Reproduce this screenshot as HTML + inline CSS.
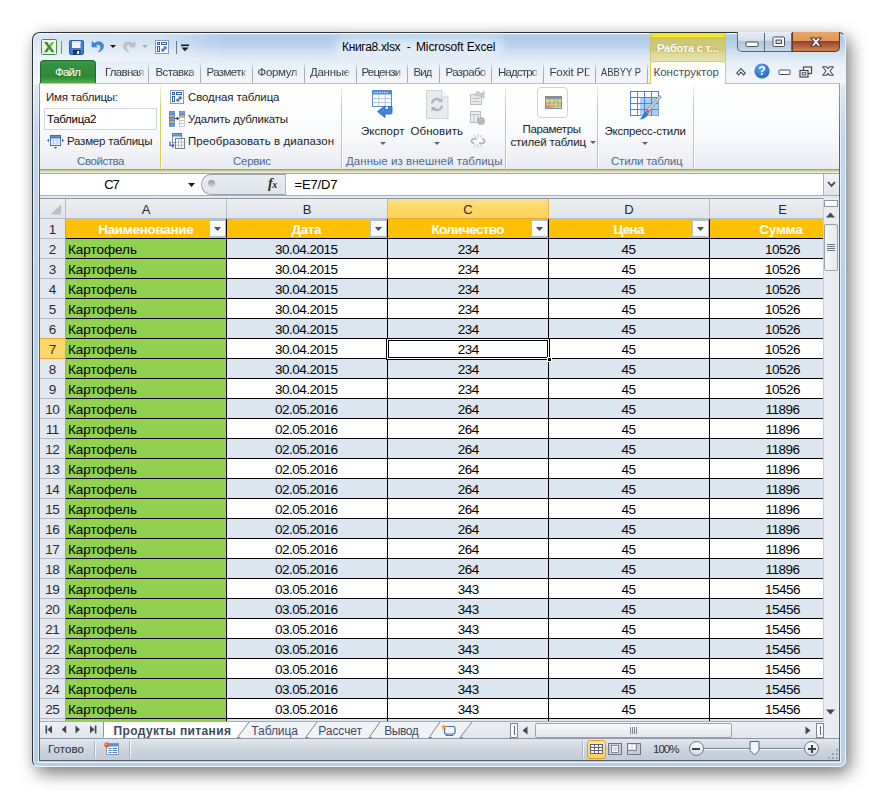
<!DOCTYPE html>
<html lang="ru"><head><meta charset="utf-8"><title>Книга8.xlsx - Microsoft Excel</title>
<style>
html,body{margin:0;padding:0;background:#fff;}
body{width:879px;height:800px;overflow:hidden;position:relative;font-family:"Liberation Sans",sans-serif;}
#r div,#r span.t,#r svg{position:absolute;box-sizing:border-box;}
#r span.t{white-space:nowrap;}
#r{position:absolute;left:0;top:0;width:879px;height:800px;overflow:hidden;}
</style></head>
<body><div id="r">
<div style="left:32px;top:32px;width:814px;height:735px;border-radius:8px 8px 7px 7px;background:#b4d0ea;box-shadow:4px 6px 17px 0 rgba(0,0,0,.54);"></div>
<div style="left:32px;top:32px;width:814px;height:735px;border-radius:8px 8px 7px 7px;border:1px solid #2c3238;border-right-color:#eef4fa;border-bottom-color:#eef4fa;background:linear-gradient(#c6daef 0px,#aecbe9 4px,#b9d2ec 12px,#d3e2f2 21px,#e7eff7 30px,#f0f4f9 42px,#f3f6fa 51px,#dde8f4 52px,#d2e2f2 73px,#c1d8ee 98px,#b9d4ec 218px,#b4d0ea 260px,#b4d0ea 735px);"></div>
<div style="left:33px;top:33px;width:812px;height:733px;border-radius:7px 7px 6px 6px;border:1px solid rgba(255,255,255,.8);border-right:none;border-bottom:none;"></div>
<div style="left:38px;top:83px;width:803px;height:680px;border:1px solid #e8f0f8;border-top:none;"></div>
<div style="left:39px;top:83px;width:801px;height:678px;background:#fff;border:1px solid #566070;border-top:none;"></div>
<div style="left:39px;top:83px;width:1px;height:60px;background:linear-gradient(#98a2b0,#566070)"></div>
<div style="left:839px;top:83px;width:1px;height:60px;background:linear-gradient(#98a2b0,#566070)"></div>
<div style="left:336px;top:39px;width:166px;height:17px;background:rgba(255,255,255,.6);filter:blur(6px);border-radius:8px"></div>
<div style="left:34px;top:34px;width:190px;height:27px;background:linear-gradient(90deg,rgba(255,255,255,.5),rgba(255,255,255,.42) 65%,rgba(255,255,255,0));border-radius:6px 0 0 0"></div>
<span class="t" id="t1" style="font-size:12px;color:#000;line-height:18px;top:38.00px;letter-spacing:-0.318px;left:342px;">Книга8.xlsx</span>
<span class="t" id="t2" style="font-size:12px;color:#000;line-height:18px;top:38.00px;left:406.8px;">-</span>
<span class="t" id="t3" style="font-size:12px;color:#000;line-height:18px;top:38.00px;letter-spacing:-0.133px;left:416px;">Microsoft Excel</span>
<div style="left:650px;top:33px;width:76px;height:28px;background:linear-gradient(#f5e626 0,#f5e626 4px,#cdc670 4px,#d0ca78 17px,#dfd99c 21px,#e6e2b0 28px);border-left:1px solid #c9c36a;border-right:1px solid #c9c36a;"></div>
<span class="t" id="t4" style="font-size:11px;color:#fff;line-height:16px;top:39.50px;font-weight:700;letter-spacing:-0.198px;left:657px;text-shadow:0 0 2px #a8a250;">Работа с т...</span>
<div style="left:737px;top:32px;width:103px;height:20px;border:1px solid #5a6a7c;border-top:none;border-radius:0 0 5px 5px;background:linear-gradient(#e8f0f8,#d2deea 45%,#b4c6d8 50%,#c6d6e6);"></div>
<div style="left:792px;top:32px;width:48px;height:20px;border:1px solid #6a3a30;border-top:none;border-radius:0 0 5px 0;background:linear-gradient(#e9a868,#e09858 45%,#9a4030 50%,#c87848 90%);"></div>
<div style="left:764px;top:33px;width:1px;height:18px;background:#5a6a7c"></div>
<div style="left:791px;top:33px;width:1px;height:18px;background:#5a6a7c"></div>
<svg style="left:41px;top:39px" width="16" height="16" viewBox="0 0 16 16" ><rect x="0.5" y="0.5" width="15" height="15" rx="1" fill="#f4f1d8" stroke="#3a9440"/><rect x="9" y="2" width="5" height="12" fill="#fff"/><path d="M3 3h3.2l2 3.2L10.4 3h3L9.8 8l3.8 5.2h-3.2L8.2 9.8 6 13.200H3L6.700 8z" fill="#2f8f38"/><path d="M8.200 6.200L10.400 3h3L9.8 8z" fill="#7cc850"/></svg>
<div style="left:61px;top:41px;width:1px;height:13px;background:#7f8a98"></div>
<svg style="left:69px;top:40px" width="15" height="15" viewBox="0 0 15 15" ><rect x="0.500" y="0.500" width="14" height="14" rx="1.200" fill="#3f7fd0" stroke="#2a5fb0"/><rect x="3" y="1" width="8.500" height="7" fill="#f4f6fa"/><rect x="3" y="1" width="8.500" height="2" fill="#dfe6f0"/><rect x="4" y="10" width="7.500" height="4.500" fill="#26324a"/><rect x="8" y="11" width="2.200" height="3" fill="#e8ecf2"/></svg>
<svg style="left:91px;top:40px" width="14" height="13" viewBox="0 0 14 13" ><path d="M1 1.500v5.500h5.500L4.600 5.200C6.500 3.800 9.200 4.300 9.600 6.600c0.300 2-0.600 3.800-2.400 5.400 3.600-1 5.800-3.600 5.200-6.800C11.800 1.600 6.800 0.400 3.200 3.600z" fill="#3f86d8" stroke="#2a6cc0" stroke-width=".5"/></svg>
<svg style="left:110px;top:45px" width="6" height="3" viewBox="0 0 6 3" ><path d="M0 0h6L3 3z" fill="#1a1a1a"/></svg>
<svg style="left:123px;top:40px" width="13" height="13" viewBox="0 0 13 13" ><path d="M12 1.500v5.500H6.500l1.900-1.800C6.500 3.800 3.800 4.300 3.400 6.600c-0.300 2 0.600 3.800 2.400 5.400-3.600-1-5.800-3.600-5.200-6.800C1.200 1.600 6.200 0.400 9.800 3.600z" fill="#bcc3cb" stroke="#aab2bc" stroke-width=".5"/></svg>
<svg style="left:142px;top:45px" width="6" height="3" viewBox="0 0 6 3" ><path d="M0 0h6L3 3z" fill="#a4abb4"/></svg>
<svg style="left:155px;top:40px" width="14" height="14" viewBox="0 0 14 14" ><rect x="0.500" y="0.500" width="13" height="13" fill="#fbfcfd" stroke="#8f98a6"/><rect x="2.500" y="2.500" width="2" height="2" fill="#fff" stroke="#2f5fc0"/><rect x="6.500" y="2.500" width="5" height="2" fill="#fff" stroke="#2f5fc0"/><rect x="2.500" y="6.500" width="2" height="5" fill="#fff" stroke="#2f5fc0"/><path d="M7 11l4-4M8.500 7h2.500v2.500M7 8.500V11h2.500" stroke="#2f5fc0" fill="none" stroke-width="1.100"/></svg>
<div style="left:176px;top:41px;width:1px;height:13px;background:#6f7a88"></div>
<svg style="left:181px;top:44px" width="8" height="8" viewBox="0 0 8 8" ><rect x="0" y="0.500" width="8" height="1.600" fill="#1a1a1a"/><path d="M0.500 3.500h7L4 7.200z" fill="#1a1a1a"/></svg>
<svg style="left:745px;top:41px" width="14" height="7" viewBox="0 0 14 7" ><rect x="1" y="1" width="12" height="4.500" rx="0.800" fill="#fff" stroke="#46505e" stroke-width="1"/></svg>
<svg style="left:772px;top:36px" width="14" height="12" viewBox="0 0 14 12" ><rect x="1" y="1" width="11.500" height="9.500" rx="1" fill="#fff" stroke="#46505e"/><rect x="4" y="4" width="5.500" height="3.500" fill="#c8d4e2" stroke="#46505e"/></svg>
<svg style="left:810px;top:36.5px" width="12" height="10" viewBox="0 0 12 10" ><path d="M0.800 0.800h3.700L6 2.700 7.500 0.800h3.700L7.900 5l3.300 4.200H7.500L6 7.300 4.500 9.200H0.800L4.100 5z" fill="#fff" stroke="#5a3030" stroke-width="1.100" stroke-linejoin="round"/></svg>
<svg style="left:736px;top:67px" width="10" height="9" viewBox="0 0 10 9" ><path d="M0.800 6.200L5 1.600l4.200 4.600-1.700 1.700L5 5.200 2.500 7.900z" fill="#fff" stroke="#3a4450" stroke-width="1.100" stroke-linejoin="round"/></svg>
<svg style="left:754px;top:63px" width="16" height="16" viewBox="0 0 16 16" ><defs><radialGradient id="hg" cx="40%" cy="30%" r="75%"><stop offset="0" stop-color="#5aa6ee"/><stop offset="1" stop-color="#1c66c4"/></radialGradient></defs><circle cx="8" cy="8" r="7.600" fill="url(#hg)"/><text x="8" y="12.300" text-anchor="middle" font-family="Liberation Sans,sans-serif" font-weight="700" font-size="12" fill="#fff">?</text></svg>
<svg style="left:778px;top:69px" width="13" height="7" viewBox="0 0 13 7" ><rect x="1" y="1" width="11" height="4.500" rx="0.800" fill="#fff" stroke="#46505e"/></svg>
<svg style="left:799px;top:66px" width="14" height="12" viewBox="0 0 14 12" ><rect x="4.500" y="1" width="8" height="6.500" fill="#fff" stroke="#3a4450" stroke-width="1.200"/><rect x="1" y="4.500" width="8" height="6.500" fill="#fff" stroke="#3a4450" stroke-width="1.200"/><rect x="3.200" y="6.700" width="3.600" height="2.200" fill="#fff" stroke="#3a4450" stroke-width="0.900"/></svg>
<svg style="left:822px;top:66px" width="12" height="10" viewBox="0 0 12 10" ><path d="M0.800 0.800h3.700L6 2.700 7.500 0.800h3.700L7.900 5l3.300 4.200H7.500L6 7.300 4.500 9.200H0.800L4.100 5z" fill="#fff" stroke="#46505e" stroke-width="1.100" stroke-linejoin="round"/></svg>
<div style="left:40px;top:60px;width:56px;height:23px;border-radius:4px 4px 0 0;background:linear-gradient(#3a9644,#2c8836 70%,#3c9c3c 85%,#56b048);border:1px solid #1e6a2a;border-bottom:none;"></div>
<span class="t" id="t5" style="font-size:11.5px;color:#fff;line-height:17px;top:63.50px;letter-spacing:-0.760px;left:55px;">Файл</span>
<div style="left:105px;top:63.50px;width:38.5px;height:17px;overflow:hidden"><span class="t" id="t6" style="font-size:11.5px;color:#3a404a;line-height:17px;top:0px;letter-spacing:-0.709px;left:0px;-webkit-mask-image:linear-gradient(90deg,#000 34px,rgba(0,0,0,.35) 38px);">Главная</span></div>
<div style="left:155.5px;top:63.50px;width:39.0px;height:17px;overflow:hidden"><span class="t" id="t7" style="font-size:11.5px;color:#3a404a;line-height:17px;top:0px;letter-spacing:-0.619px;left:0px;-webkit-mask-image:linear-gradient(90deg,#000 35px,rgba(0,0,0,.35) 39px);">Вставка</span></div>
<div style="left:206.5px;top:63.50px;width:39.5px;height:17px;overflow:hidden"><span class="t" id="t8" style="font-size:11.5px;color:#3a404a;line-height:17px;top:0px;letter-spacing:-0.603px;left:0px;-webkit-mask-image:linear-gradient(90deg,#000 35px,rgba(0,0,0,.35) 39px);">Разметка страницы</span></div>
<div style="left:257.5px;top:63.50px;width:40.5px;height:17px;overflow:hidden"><span class="t" id="t9" style="font-size:11.5px;color:#3a404a;line-height:17px;top:0px;letter-spacing:-0.355px;left:0px;-webkit-mask-image:linear-gradient(90deg,#000 36px,rgba(0,0,0,.35) 40px);">Формулы</span></div>
<div style="left:310px;top:63.50px;width:39.5px;height:17px;overflow:hidden"><span class="t" id="t10" style="font-size:11.5px;color:#3a404a;line-height:17px;top:0px;letter-spacing:-0.288px;left:0px;-webkit-mask-image:linear-gradient(90deg,#000 35px,rgba(0,0,0,.35) 39px);">Данные</span></div>
<div style="left:361.5px;top:63.50px;width:39.0px;height:17px;overflow:hidden"><span class="t" id="t11" style="font-size:11.5px;color:#3a404a;line-height:17px;top:0px;letter-spacing:-0.808px;left:0px;-webkit-mask-image:linear-gradient(90deg,#000 35px,rgba(0,0,0,.35) 39px);">Рецензирование</span></div>
<div style="left:413.5px;top:63.50px;width:20.5px;height:17px;overflow:hidden"><span class="t" id="t12" style="font-size:11.5px;color:#3a404a;line-height:17px;top:0px;letter-spacing:-0.902px;left:0px;-webkit-mask-image:linear-gradient(90deg,#000 16px,rgba(0,0,0,.35) 20px);">Вид</span></div>
<div style="left:445.5px;top:63.50px;width:40.0px;height:17px;overflow:hidden"><span class="t" id="t13" style="font-size:11.5px;color:#3a404a;line-height:17px;top:0px;letter-spacing:-0.641px;left:0px;-webkit-mask-image:linear-gradient(90deg,#000 36px,rgba(0,0,0,.35) 40px);">Разработчик</span></div>
<div style="left:498px;top:63.50px;width:39px;height:17px;overflow:hidden"><span class="t" id="t14" style="font-size:11.5px;color:#3a404a;line-height:17px;top:0px;letter-spacing:-0.845px;left:0px;-webkit-mask-image:linear-gradient(90deg,#000 35px,rgba(0,0,0,.35) 39px);">Надстройки</span></div>
<div style="left:549.5px;top:63.50px;width:40.0px;height:17px;overflow:hidden"><span class="t" id="t15" style="font-size:11.5px;color:#3a404a;line-height:17px;top:0px;letter-spacing:-0.198px;left:0px;-webkit-mask-image:linear-gradient(90deg,#000 36px,rgba(0,0,0,.35) 40px);">Foxit PDF</span></div>
<span class="t" id="t16" style="font-size:11.5px;color:#3a404a;line-height:17px;top:63.50px;left:601px;transform:scaleX(0.815);transform-origin:0 50%;">ABBYY P</span>
<div style="left:148px;top:62px;width:1px;height:21px;background:linear-gradient(rgba(150,160,175,0),#a8b0bc 40%,#a0a8b4);"></div>
<div style="left:200px;top:62px;width:1px;height:21px;background:linear-gradient(rgba(150,160,175,0),#a8b0bc 40%,#a0a8b4);"></div>
<div style="left:252px;top:62px;width:1px;height:21px;background:linear-gradient(rgba(150,160,175,0),#a8b0bc 40%,#a0a8b4);"></div>
<div style="left:304px;top:62px;width:1px;height:21px;background:linear-gradient(rgba(150,160,175,0),#a8b0bc 40%,#a0a8b4);"></div>
<div style="left:356px;top:62px;width:1px;height:21px;background:linear-gradient(rgba(150,160,175,0),#a8b0bc 40%,#a0a8b4);"></div>
<div style="left:407px;top:62px;width:1px;height:21px;background:linear-gradient(rgba(150,160,175,0),#a8b0bc 40%,#a0a8b4);"></div>
<div style="left:439px;top:62px;width:1px;height:21px;background:linear-gradient(rgba(150,160,175,0),#a8b0bc 40%,#a0a8b4);"></div>
<div style="left:491px;top:62px;width:1px;height:21px;background:linear-gradient(rgba(150,160,175,0),#a8b0bc 40%,#a0a8b4);"></div>
<div style="left:543px;top:62px;width:1px;height:21px;background:linear-gradient(rgba(150,160,175,0),#a8b0bc 40%,#a0a8b4);"></div>
<div style="left:595px;top:62px;width:1px;height:21px;background:linear-gradient(rgba(150,160,175,0),#a8b0bc 40%,#a0a8b4);"></div>
<div style="left:647px;top:62px;width:1px;height:21px;background:linear-gradient(rgba(150,160,175,0),#a8b0bc 40%,#a0a8b4);"></div>
<div style="left:650px;top:61px;width:76px;height:23px;background:linear-gradient(#fffff4,#fff 40%);border:1px solid #d8d240;border-bottom:none;border-radius:3px 3px 0 0;"></div>
<span class="t" id="t17" style="font-size:11.5px;color:#444c58;line-height:17px;top:63.50px;letter-spacing:-0.008px;left:653.5px;">Конструктор</span>
<div style="left:40px;top:83px;width:799px;height:87px;background:linear-gradient(#ffffff,#fbfcfd 50%,#f1f3f7 78%,#e7ebf1);border-top:1px solid #d6cf30;"></div>
<div style="left:40px;top:169px;width:799px;height:1px;background:#a8a83c"></div>
<div style="left:40px;top:170px;width:799px;height:1px;background:#c6c67c"></div>
<div style="left:40px;top:171px;width:799px;height:1px;background:#dcdcb4"></div>
<div style="left:40px;top:172px;width:799px;height:1px;background:#e8ebe6"></div>
<div style="left:651px;top:83px;width:74px;height:1px;background:#fff"></div>
<div style="left:160px;top:85px;width:1px;height:84px;background:linear-gradient(rgba(216,207,90,.2),#d6ce5a 30%,#d6ce5a)"></div>
<div style="left:161px;top:85px;width:1px;height:84px;background:rgba(255,255,255,.9)"></div>
<div style="left:341px;top:85px;width:1px;height:84px;background:linear-gradient(rgba(216,207,90,.2),#d6ce5a 30%,#d6ce5a)"></div>
<div style="left:342px;top:85px;width:1px;height:84px;background:rgba(255,255,255,.9)"></div>
<div style="left:505px;top:85px;width:1px;height:84px;background:linear-gradient(rgba(216,207,90,.2),#d6ce5a 30%,#d6ce5a)"></div>
<div style="left:506px;top:85px;width:1px;height:84px;background:rgba(255,255,255,.9)"></div>
<div style="left:597px;top:85px;width:1px;height:84px;background:linear-gradient(rgba(216,207,90,.2),#d6ce5a 30%,#d6ce5a)"></div>
<div style="left:598px;top:85px;width:1px;height:84px;background:rgba(255,255,255,.9)"></div>
<div style="left:693px;top:85px;width:1px;height:84px;background:linear-gradient(rgba(216,207,90,.2),#d6ce5a 30%,#d6ce5a)"></div>
<div style="left:694px;top:85px;width:1px;height:84px;background:rgba(255,255,255,.9)"></div>
<span class="t" id="t18" style="font-size:11.5px;color:#1e1e1e;line-height:17px;top:89.00px;letter-spacing:-0.217px;left:46px;">Имя таблицы:</span>
<div style="left:44px;top:108px;width:113px;height:22px;background:#fff;border:1px solid #d0d6de;"></div>
<span class="t" id="t19" style="font-size:11.5px;color:#000;line-height:17px;top:110.50px;letter-spacing:-0.286px;left:47px;">Таблица2</span>
<span class="t" id="t20" style="font-size:11.5px;color:#1e1e1e;line-height:17px;top:132.50px;letter-spacing:-0.216px;left:67px;">Размер таблицы</span>
<span class="t" id="t21" style="font-size:11.5px;color:#4f6a8c;line-height:17px;top:152.50px;letter-spacing:-0.429px;left:77px;">Свойства</span>
<span class="t" id="t22" style="font-size:11.5px;color:#1e1e1e;line-height:17px;top:89.00px;letter-spacing:-0.109px;left:188px;">Сводная таблица</span>
<span class="t" id="t23" style="font-size:11.5px;color:#1e1e1e;line-height:17px;top:110.50px;letter-spacing:-0.241px;left:188px;">Удалить дубликаты</span>
<span class="t" id="t24" style="font-size:11.5px;color:#1e1e1e;line-height:17px;top:132.50px;letter-spacing:0.085px;left:188px;">Преобразовать в диапазон</span>
<span class="t" id="t25" style="font-size:11.5px;color:#4f6a8c;line-height:17px;top:152.50px;letter-spacing:-0.278px;left:233px;">Сервис</span>
<span class="t" id="t26" style="font-size:11.5px;color:#1e1e1e;line-height:17px;top:122.50px;letter-spacing:0.047px;left:361px;">Экспорт</span>
<span class="t" id="t27" style="font-size:11.5px;color:#1e1e1e;line-height:17px;top:122.50px;letter-spacing:0.060px;left:410.5px;">Обновить</span>
<span class="t" id="t28" style="font-size:11.5px;color:#4f6a8c;line-height:17px;top:152.50px;letter-spacing:0.035px;left:346px;">Данные из внешней таблицы</span>
<span class="t" id="t29" style="font-size:11.5px;color:#1e1e1e;line-height:17px;top:121.00px;letter-spacing:-0.352px;left:522.5px;">Параметры</span>
<span class="t" id="t30" style="font-size:11.5px;color:#1e1e1e;line-height:17px;top:133.50px;letter-spacing:-0.167px;left:510.5px;">стилей таблиц</span>
<span class="t" id="t31" style="font-size:11.5px;color:#1e1e1e;line-height:17px;top:122.50px;letter-spacing:-0.201px;left:604.5px;">Экспресс-стили</span>
<span class="t" id="t32" style="font-size:11.5px;color:#4f6a8c;line-height:17px;top:152.50px;letter-spacing:-0.196px;left:611px;">Стили таблиц</span>
<svg style="left:47px;top:134px" width="17" height="15" viewBox="0 0 17 15" ><rect x="3.500" y="1.500" width="10" height="10" fill="#fff" stroke="#3a68b8"/><rect x="3.500" y="1.500" width="10" height="2.500" fill="#5b8fd8" stroke="#3a68b8"/><path d="M6.500 4v7.500M10 4v7.500M3.500 6.500h10M3.500 9h10" stroke="#a8c0e4" stroke-width="0.800"/><path d="M0 6.500L2 4.800v3.400zM17 6.500L15 4.800v3.400zM8.500 15L6.800 13h3.400z" fill="#2f62c0"/></svg>
<svg style="left:170px;top:90px" width="14" height="14" viewBox="0 0 14 14" ><rect x="0.500" y="0.500" width="13" height="13" fill="#fbfcfd" stroke="#8f98a6"/><rect x="2.500" y="2.500" width="2" height="2" fill="#fff" stroke="#2f5fc0"/><rect x="6.500" y="2.500" width="5" height="2" fill="#fff" stroke="#2f5fc0"/><rect x="2.500" y="6.500" width="2" height="5" fill="#fff" stroke="#2f5fc0"/><path d="M7 11l4-4M8.500 7h2.500v2.500M7 8.500V11h2.500" stroke="#2f5fc0" fill="none" stroke-width="1.100"/></svg>
<svg style="left:169px;top:111px" width="16" height="16" viewBox="0 0 16 16" ><g stroke="#4a7cc8" stroke-width="0.700"><rect x="0.500" y="0.500" width="5" height="3" fill="#5b9be8"/><rect x="0.500" y="3.500" width="5" height="3" fill="#f0a040"/><rect x="0.500" y="6.500" width="5" height="3" fill="#5b9be8"/><rect x="0.500" y="9.500" width="5" height="3" fill="#f0a040"/><rect x="0.500" y="12.500" width="5" height="3" fill="#5b9be8"/><rect x="10.500" y="0.500" width="5" height="3" fill="#5b9be8"/><rect x="10.500" y="3.500" width="5" height="3" fill="#f0a040"/></g><g stroke="#b4bcc8" stroke-width="0.700" fill="#fff"><rect x="10.500" y="6.500" width="5" height="3"/><rect x="10.500" y="9.500" width="5" height="3"/><rect x="10.500" y="12.500" width="5" height="3"/></g><path d="M6 7.500h2.500" stroke="#26364e" stroke-width="1"/><path d="M7.800 5.500l2.400 2-2.400 2z" fill="#26364e"/></svg>
<svg style="left:169px;top:133px" width="16" height="16" viewBox="0 0 16 16" ><rect x="3.500" y="0.500" width="9" height="9" fill="#fff" stroke="#7e8fa8"/><rect x="3.500" y="0.500" width="9" height="2.500" fill="#6fa0e0" stroke="#4a7cc8"/><rect x="6.500" y="5.500" width="9" height="10" fill="#fff" stroke="#6e7886"/><path d="M9.500 5.500v10M12.500 5.500v10M6.500 9h9M6.500 12.200h9" stroke="#a4aebc" stroke-width="0.800"/><path d="M1 8.500v4h3.500M3 10.700l1.800 1.800L3 14.300" stroke="#2f62c0" stroke-width="1.200" fill="none"/></svg>
<svg style="left:372px;top:90px" width="21" height="29" viewBox="0 0 21 29" ><rect x="0.500" y="0.500" width="19" height="16" fill="#fff" stroke="#5a86cc"/><rect x="0.500" y="0.500" width="19" height="4" fill="#4f8ade"/><path d="M2 2.500h15" stroke="#cfe0f8" stroke-width="1" stroke-dasharray="1.500 1"/><path d="M6.800 4.500v12M13.200 4.500v12M0.500 8.500h19M0.500 12.500h19" stroke="#a9c0e4" stroke-width="0.900"/><path d="M20 16.500v6c0 1-0.500 1.500-1.500 1.500H13v3.500L5.500 21.500 13 16v3.500h3.500v-3z" fill="#3f86e0" stroke="#245cb8" stroke-width="0.800"/></svg>
<svg style="left:426px;top:90px" width="23" height="29" viewBox="0 0 23 29" ><path d="M0.500 0.500h15l6.500 6.500v21.500H0.500z" fill="#e9ebee" stroke="#cfd3d8"/><path d="M15.500 0.500v6.500h6.500" fill="#f6f7f8" stroke="#cfd3d8"/><path d="M6 13.500a5 5 0 0 1 9-2.500M16 15.500a5 5 0 0 1-9 2.500" stroke="#aeb4bb" stroke-width="2.200" fill="none"/><path d="M16.500 7.500v4.500H12zM5.500 21.500V17H10z" fill="#aeb4bb"/></svg>
<svg style="left:470px;top:90px" width="16" height="15" viewBox="0 0 16 15" ><rect x="0.500" y="4.500" width="11" height="10" fill="#e6e8eb" stroke="#b9bec5"/><path d="M2.500 8.500h7M2.500 11.500h7" stroke="#b9bec5"/><path d="M4 5l4-4 3 3 3-2.500V8l-3-1.500z" fill="#c9cdd3" stroke="#aeb4bb" stroke-width="0.700"/></svg>
<svg style="left:470px;top:111px" width="16" height="15" viewBox="0 0 16 15" ><rect x="0.500" y="0.500" width="10" height="11" fill="#eceef0" stroke="#b9bec5"/><path d="M0.500 3.500h10M4 3.500v8M7.500 3.500v8" stroke="#b9bec5"/><circle cx="11" cy="10" r="4" fill="#b4b9c0"/></svg>
<svg style="left:469px;top:133px" width="18" height="16" viewBox="0 0 18 16" ><path d="M2.500 8a2.200 2.200 0 0 1 2.200-2.200H8M15.500 8a2.200 2.200 0 0 1-2.200 2.200H10M5 10.200H4.700A2.200 2.200 0 0 1 2.500 8M13 5.800h0.300A2.200 2.200 0 0 1 15.500 8" stroke="#a9aeb6" stroke-width="1.600" fill="none"/><path d="M9 1v3.500M9 11.500V15M5 2l1.800 2.800M13 2l-1.800 2.800M5 14l1.800-2.800M13 14l-1.800-2.800" stroke="#b4b9c0" stroke-width="0.900"/></svg>
<svg style="left:380px;top:142.0px" width="6" height="3" viewBox="0 0 6 3" ><path d="M0 0h6L3 3z" fill="#5a626e"/></svg>
<svg style="left:433.5px;top:142.0px" width="6" height="3" viewBox="0 0 6 3" ><path d="M0 0h6L3 3z" fill="#5a626e"/></svg>
<svg style="left:589.5px;top:140.5px" width="6" height="3" viewBox="0 0 6 3" ><path d="M0 0h6L3 3z" fill="#5a626e"/></svg>
<svg style="left:642px;top:142.0px" width="6" height="3" viewBox="0 0 6 3" ><path d="M0 0h6L3 3z" fill="#5a626e"/></svg>
<div style="left:537px;top:87px;width:31px;height:31px;border:1px solid #cfd4da;border-radius:4px;background:#fff"></div>
<svg style="left:545px;top:96px" width="17" height="13" viewBox="0 0 17 13" ><rect x="0.500" y="0.500" width="16" height="12" fill="#fff" stroke="#8a8f96"/><rect x="1" y="1" width="15" height="2.500" fill="#8a8f98"/><g opacity="0.75"><rect x="1" y="4" width="3.500" height="2.500" fill="#e8c840"/><rect x="5" y="4" width="3.500" height="2.500" fill="#d8d060"/><rect x="9" y="4" width="3.500" height="2.500" fill="#a8c860"/><rect x="13" y="4" width="3" height="2.500" fill="#e8c840"/><rect x="1" y="7" width="3.500" height="2.500" fill="#e89848"/><rect x="5" y="7" width="3.500" height="2.500" fill="#e8c840"/><rect x="9" y="7" width="3.500" height="2.500" fill="#d8d060"/><rect x="13" y="7" width="3" height="2.500" fill="#a8c860"/><rect x="1" y="10" width="3.500" height="2" fill="#d86848"/><rect x="5" y="10" width="3.500" height="2" fill="#e89848"/><rect x="9" y="10" width="3.500" height="2" fill="#e8c840"/><rect x="13" y="10" width="3" height="2" fill="#d8d060"/></g><path d="M4.750 3.500v9M8.750 3.500v9M12.750 3.500v9M0.500 6.750h16M0.500 9.750h16" stroke="#6a6f78" stroke-width="0.500"/></svg>
<svg style="left:630px;top:90px" width="32" height="30" viewBox="0 0 32 30" ><rect x="0.500" y="1.500" width="28" height="24" fill="#fff" stroke="#4a86d8"/><rect x="10" y="7.500" width="18.500" height="18" fill="#a8d0f4"/><path d="M0.500 7.500h28M0.500 13.500h28M0.500 19.500h28M7.500 1.500v24M14.500 1.500v24M21.500 1.500v24" stroke="#4a86d8" stroke-width="1"/><path d="M29.500 5.500l2 1.500L19.500 21l-2.500-1.800z" fill="#c9ccd2" stroke="#7e848e" stroke-width="0.700"/><path d="M17 19l3 2.200-1.500 2L15 22z" fill="#c86a50"/><path d="M15 21.500l3.500 2.200C17 27 14 29 9.500 29.500c2.500-2 3.500-5 5.500-8z" fill="#2f7ad8"/></svg>
<div style="left:40px;top:173px;width:799px;height:23px;background:#fff;border-top:1px solid #9aa3ae;border-bottom:1px solid #a6aeb8;"></div>
<div style="left:40px;top:196px;width:799px;height:2px;background:#e4e9ef"></div>
<span class="t" id="t33" style="font-size:13px;color:#000;line-height:19px;top:175.00px;letter-spacing:-1.125px;left:-38.56px;width:300px;text-align:center;">C7</span>
<span class="t" id="t34" style="font-size:13px;color:#000;line-height:19px;top:175.00px;letter-spacing:-0.147px;left:294.5px;">=E7/D7</span>
<svg style="left:188px;top:183px" width="7" height="4" viewBox="0 0 7 4" ><path d="M0 0h7L3.500 4z" fill="#1a1a1a"/></svg>
<div style="left:201px;top:174px;width:85px;height:21px;background:linear-gradient(#e9edf2,#dfe4eb);border:1px solid #9aa2ae;border-right:1px solid #b4bcc6;border-radius:10px 0 0 10px;"></div>
<svg style="left:207px;top:179px" width="9" height="9" viewBox="0 0 9 9" ><defs><linearGradient id="kg" x1="0" y1="0" x2="0" y2="1"><stop offset="0" stop-color="#8e96a2"/><stop offset="1" stop-color="#d4d9e0"/></linearGradient></defs><circle cx="4.500" cy="4.500" r="3.600" fill="url(#kg)"/></svg>
<span class="t" style="left:268px;top:175px;font-family:'Liberation Serif',serif;font-style:italic;font-weight:700;font-size:14px;line-height:18px;color:#2a2a2a;letter-spacing:-0.5px">f<span style="font-size:10px">x</span></span>
<div style="left:823px;top:174px;width:16px;height:21px;background:linear-gradient(#f2f4f7,#dfe4ea);border-left:1px solid #a9b1bc;"></div>
<svg style="left:827px;top:181px" width="9" height="7" viewBox="0 0 9 7" ><path d="M1 1l3.500 3.800L8 1" stroke="#3d4652" stroke-width="1.800" fill="none"/></svg>
<div style="left:40px;top:198px;width:783px;height:1px;background:#8e97a3"></div>
<div style="left:40px;top:199px;width:783px;height:20px;background:linear-gradient(#eceff3,#e5e8ed 50%,#e1e5ea);"></div>
<div style="left:40px;top:218px;width:783px;height:1px;background:#b4bcc8"></div>
<div style="left:65px;top:199px;width:1px;height:20px;background:#b4bcc8"></div>
<div style="left:226px;top:199px;width:1px;height:20px;background:#b4bcc8"></div>
<div style="left:387px;top:199px;width:1px;height:20px;background:#b4bcc8"></div>
<div style="left:548px;top:199px;width:1px;height:20px;background:#b4bcc8"></div>
<div style="left:709px;top:199px;width:1px;height:20px;background:#b4bcc8"></div>
<div style="left:387px;top:199px;width:162px;height:20px;background:linear-gradient(#fde08c,#fdd868 45%,#fdd560);border-bottom:1px solid #e6a638;border-left:1px solid #eab850;border-right:1px solid #eab850"></div>
<svg style="left:50px;top:204px" width="11" height="11" viewBox="0 0 11 11" ><path d="M11 0.500V10.500H0.500z" fill="#b9bfc9"/></svg>
<span class="t" id="t35" style="font-size:13px;color:#1f2a38;line-height:19px;top:200.00px;left:-4.00px;width:300px;text-align:center;">A</span>
<span class="t" id="t36" style="font-size:13px;color:#1f2a38;line-height:19px;top:200.00px;left:157.00px;width:300px;text-align:center;">B</span>
<span class="t" id="t37" style="font-size:13px;color:#1f2a38;line-height:19px;top:200.00px;left:318.00px;width:300px;text-align:center;">C</span>
<span class="t" id="t38" style="font-size:13px;color:#1f2a38;line-height:19px;top:200.00px;left:479.00px;width:300px;text-align:center;">D</span>
<span class="t" id="t39" style="font-size:13px;color:#1f2a38;line-height:19px;top:200.00px;left:632.50px;width:300px;text-align:center;">E</span>
<div style="left:40px;top:219px;width:25px;height:502px;background:#e4e8ee;"></div>
<div style="left:65px;top:219px;width:1px;height:502px;background:#9aa3af"></div>
<div style="left:66px;top:219px;width:757px;height:19px;background:#ffc000"></div>
<div style="left:40px;top:238px;width:25px;height:1px;background:#b4bcc8"></div>
<span class="t" id="t40" style="font-size:13.5px;color:#1f2a38;line-height:20px;top:219.50px;letter-spacing:-0.500px;left:-97.75px;width:300px;text-align:center;">1</span>
<div style="left:66px;top:238px;width:757px;height:1px;background:#000"></div>
<div style="left:40px;top:258px;width:25px;height:1px;background:#b4bcc8"></div>
<span class="t" id="t41" style="font-size:13.5px;color:#1f2a38;line-height:20px;top:239.50px;letter-spacing:-0.500px;left:-97.75px;width:300px;text-align:center;">2</span>
<div style="left:66px;top:239px;width:160px;height:19px;background:#92d050"></div>
<div style="left:227px;top:239px;width:596px;height:19px;background:#dce6f1"></div>
<div style="left:66px;top:258px;width:757px;height:1px;background:#000"></div>
<div style="left:40px;top:278px;width:25px;height:1px;background:#b4bcc8"></div>
<span class="t" id="t42" style="font-size:13.5px;color:#1f2a38;line-height:20px;top:259.50px;letter-spacing:-0.500px;left:-97.75px;width:300px;text-align:center;">3</span>
<div style="left:66px;top:259px;width:160px;height:19px;background:#92d050"></div>
<div style="left:66px;top:278px;width:757px;height:1px;background:#000"></div>
<div style="left:40px;top:298px;width:25px;height:1px;background:#b4bcc8"></div>
<span class="t" id="t43" style="font-size:13.5px;color:#1f2a38;line-height:20px;top:279.50px;letter-spacing:-0.500px;left:-97.75px;width:300px;text-align:center;">4</span>
<div style="left:66px;top:279px;width:160px;height:19px;background:#92d050"></div>
<div style="left:227px;top:279px;width:596px;height:19px;background:#dce6f1"></div>
<div style="left:66px;top:298px;width:757px;height:1px;background:#000"></div>
<div style="left:40px;top:318px;width:25px;height:1px;background:#b4bcc8"></div>
<span class="t" id="t44" style="font-size:13.5px;color:#1f2a38;line-height:20px;top:299.50px;letter-spacing:-0.500px;left:-97.75px;width:300px;text-align:center;">5</span>
<div style="left:66px;top:299px;width:160px;height:19px;background:#92d050"></div>
<div style="left:66px;top:318px;width:757px;height:1px;background:#000"></div>
<div style="left:40px;top:338px;width:25px;height:1px;background:#b4bcc8"></div>
<span class="t" id="t45" style="font-size:13.5px;color:#1f2a38;line-height:20px;top:319.50px;letter-spacing:-0.500px;left:-97.75px;width:300px;text-align:center;">6</span>
<div style="left:66px;top:319px;width:160px;height:19px;background:#92d050"></div>
<div style="left:227px;top:319px;width:596px;height:19px;background:#dce6f1"></div>
<div style="left:66px;top:338px;width:757px;height:1px;background:#000"></div>
<div style="left:40px;top:358px;width:25px;height:1px;background:#b4bcc8"></div>
<div style="left:40px;top:338px;width:26px;height:21px;background:#fdd868;border:1px solid #e6a638;border-left:none"></div>
<span class="t" id="t46" style="font-size:13.5px;color:#1f2a38;line-height:20px;top:339.50px;letter-spacing:-0.500px;left:-97.75px;width:300px;text-align:center;">7</span>
<div style="left:66px;top:339px;width:160px;height:19px;background:#92d050"></div>
<div style="left:66px;top:358px;width:757px;height:1px;background:#000"></div>
<div style="left:40px;top:378px;width:25px;height:1px;background:#b4bcc8"></div>
<span class="t" id="t47" style="font-size:13.5px;color:#1f2a38;line-height:20px;top:359.50px;letter-spacing:-0.500px;left:-97.75px;width:300px;text-align:center;">8</span>
<div style="left:66px;top:359px;width:160px;height:19px;background:#92d050"></div>
<div style="left:227px;top:359px;width:596px;height:19px;background:#dce6f1"></div>
<div style="left:66px;top:378px;width:757px;height:1px;background:#000"></div>
<div style="left:40px;top:398px;width:25px;height:1px;background:#b4bcc8"></div>
<span class="t" id="t48" style="font-size:13.5px;color:#1f2a38;line-height:20px;top:379.50px;letter-spacing:-0.500px;left:-97.75px;width:300px;text-align:center;">9</span>
<div style="left:66px;top:379px;width:160px;height:19px;background:#92d050"></div>
<div style="left:66px;top:398px;width:757px;height:1px;background:#000"></div>
<div style="left:40px;top:418px;width:25px;height:1px;background:#b4bcc8"></div>
<span class="t" id="t49" style="font-size:13.5px;color:#1f2a38;line-height:20px;top:399.50px;letter-spacing:-0.500px;left:-97.75px;width:300px;text-align:center;">10</span>
<div style="left:66px;top:399px;width:160px;height:19px;background:#92d050"></div>
<div style="left:227px;top:399px;width:596px;height:19px;background:#dce6f1"></div>
<div style="left:66px;top:418px;width:757px;height:1px;background:#000"></div>
<div style="left:40px;top:438px;width:25px;height:1px;background:#b4bcc8"></div>
<span class="t" id="t50" style="font-size:13.5px;color:#1f2a38;line-height:20px;top:419.50px;letter-spacing:-0.500px;left:-97.75px;width:300px;text-align:center;">11</span>
<div style="left:66px;top:419px;width:160px;height:19px;background:#92d050"></div>
<div style="left:66px;top:438px;width:757px;height:1px;background:#000"></div>
<div style="left:40px;top:458px;width:25px;height:1px;background:#b4bcc8"></div>
<span class="t" id="t51" style="font-size:13.5px;color:#1f2a38;line-height:20px;top:439.50px;letter-spacing:-0.500px;left:-97.75px;width:300px;text-align:center;">12</span>
<div style="left:66px;top:439px;width:160px;height:19px;background:#92d050"></div>
<div style="left:227px;top:439px;width:596px;height:19px;background:#dce6f1"></div>
<div style="left:66px;top:458px;width:757px;height:1px;background:#000"></div>
<div style="left:40px;top:478px;width:25px;height:1px;background:#b4bcc8"></div>
<span class="t" id="t52" style="font-size:13.5px;color:#1f2a38;line-height:20px;top:459.50px;letter-spacing:-0.500px;left:-97.75px;width:300px;text-align:center;">13</span>
<div style="left:66px;top:459px;width:160px;height:19px;background:#92d050"></div>
<div style="left:66px;top:478px;width:757px;height:1px;background:#000"></div>
<div style="left:40px;top:498px;width:25px;height:1px;background:#b4bcc8"></div>
<span class="t" id="t53" style="font-size:13.5px;color:#1f2a38;line-height:20px;top:479.50px;letter-spacing:-0.500px;left:-97.75px;width:300px;text-align:center;">14</span>
<div style="left:66px;top:479px;width:160px;height:19px;background:#92d050"></div>
<div style="left:227px;top:479px;width:596px;height:19px;background:#dce6f1"></div>
<div style="left:66px;top:498px;width:757px;height:1px;background:#000"></div>
<div style="left:40px;top:518px;width:25px;height:1px;background:#b4bcc8"></div>
<span class="t" id="t54" style="font-size:13.5px;color:#1f2a38;line-height:20px;top:499.50px;letter-spacing:-0.500px;left:-97.75px;width:300px;text-align:center;">15</span>
<div style="left:66px;top:499px;width:160px;height:19px;background:#92d050"></div>
<div style="left:66px;top:518px;width:757px;height:1px;background:#000"></div>
<div style="left:40px;top:538px;width:25px;height:1px;background:#b4bcc8"></div>
<span class="t" id="t55" style="font-size:13.5px;color:#1f2a38;line-height:20px;top:519.50px;letter-spacing:-0.500px;left:-97.75px;width:300px;text-align:center;">16</span>
<div style="left:66px;top:519px;width:160px;height:19px;background:#92d050"></div>
<div style="left:227px;top:519px;width:596px;height:19px;background:#dce6f1"></div>
<div style="left:66px;top:538px;width:757px;height:1px;background:#000"></div>
<div style="left:40px;top:558px;width:25px;height:1px;background:#b4bcc8"></div>
<span class="t" id="t56" style="font-size:13.5px;color:#1f2a38;line-height:20px;top:539.50px;letter-spacing:-0.500px;left:-97.75px;width:300px;text-align:center;">17</span>
<div style="left:66px;top:539px;width:160px;height:19px;background:#92d050"></div>
<div style="left:66px;top:558px;width:757px;height:1px;background:#000"></div>
<div style="left:40px;top:578px;width:25px;height:1px;background:#b4bcc8"></div>
<span class="t" id="t57" style="font-size:13.5px;color:#1f2a38;line-height:20px;top:559.50px;letter-spacing:-0.500px;left:-97.75px;width:300px;text-align:center;">18</span>
<div style="left:66px;top:559px;width:160px;height:19px;background:#92d050"></div>
<div style="left:227px;top:559px;width:596px;height:19px;background:#dce6f1"></div>
<div style="left:66px;top:578px;width:757px;height:1px;background:#000"></div>
<div style="left:40px;top:598px;width:25px;height:1px;background:#b4bcc8"></div>
<span class="t" id="t58" style="font-size:13.5px;color:#1f2a38;line-height:20px;top:579.50px;letter-spacing:-0.500px;left:-97.75px;width:300px;text-align:center;">19</span>
<div style="left:66px;top:579px;width:160px;height:19px;background:#92d050"></div>
<div style="left:66px;top:598px;width:757px;height:1px;background:#000"></div>
<div style="left:40px;top:618px;width:25px;height:1px;background:#b4bcc8"></div>
<span class="t" id="t59" style="font-size:13.5px;color:#1f2a38;line-height:20px;top:599.50px;letter-spacing:-0.500px;left:-97.75px;width:300px;text-align:center;">20</span>
<div style="left:66px;top:599px;width:160px;height:19px;background:#92d050"></div>
<div style="left:227px;top:599px;width:596px;height:19px;background:#dce6f1"></div>
<div style="left:66px;top:618px;width:757px;height:1px;background:#000"></div>
<div style="left:40px;top:638px;width:25px;height:1px;background:#b4bcc8"></div>
<span class="t" id="t60" style="font-size:13.5px;color:#1f2a38;line-height:20px;top:619.50px;letter-spacing:-0.500px;left:-97.75px;width:300px;text-align:center;">21</span>
<div style="left:66px;top:619px;width:160px;height:19px;background:#92d050"></div>
<div style="left:66px;top:638px;width:757px;height:1px;background:#000"></div>
<div style="left:40px;top:658px;width:25px;height:1px;background:#b4bcc8"></div>
<span class="t" id="t61" style="font-size:13.5px;color:#1f2a38;line-height:20px;top:639.50px;letter-spacing:-0.500px;left:-97.75px;width:300px;text-align:center;">22</span>
<div style="left:66px;top:639px;width:160px;height:19px;background:#92d050"></div>
<div style="left:227px;top:639px;width:596px;height:19px;background:#dce6f1"></div>
<div style="left:66px;top:658px;width:757px;height:1px;background:#000"></div>
<div style="left:40px;top:678px;width:25px;height:1px;background:#b4bcc8"></div>
<span class="t" id="t62" style="font-size:13.5px;color:#1f2a38;line-height:20px;top:659.50px;letter-spacing:-0.500px;left:-97.75px;width:300px;text-align:center;">23</span>
<div style="left:66px;top:659px;width:160px;height:19px;background:#92d050"></div>
<div style="left:66px;top:678px;width:757px;height:1px;background:#000"></div>
<div style="left:40px;top:698px;width:25px;height:1px;background:#b4bcc8"></div>
<span class="t" id="t63" style="font-size:13.5px;color:#1f2a38;line-height:20px;top:679.50px;letter-spacing:-0.500px;left:-97.75px;width:300px;text-align:center;">24</span>
<div style="left:66px;top:679px;width:160px;height:19px;background:#92d050"></div>
<div style="left:227px;top:679px;width:596px;height:19px;background:#dce6f1"></div>
<div style="left:66px;top:698px;width:757px;height:1px;background:#000"></div>
<div style="left:40px;top:718px;width:25px;height:1px;background:#b4bcc8"></div>
<span class="t" id="t64" style="font-size:13.5px;color:#1f2a38;line-height:20px;top:699.50px;letter-spacing:-0.500px;left:-97.75px;width:300px;text-align:center;">25</span>
<div style="left:66px;top:699px;width:160px;height:19px;background:#92d050"></div>
<div style="left:66px;top:718px;width:757px;height:1px;background:#000"></div>
<div style="left:66px;top:719px;width:160px;height:2px;background:#92d050"></div>
<div style="left:227px;top:719px;width:596px;height:2px;background:#dce6f1"></div>
<div style="left:226px;top:219px;width:1px;height:502px;background:#000"></div>
<div style="left:387px;top:219px;width:1px;height:502px;background:#000"></div>
<div style="left:548px;top:219px;width:1px;height:502px;background:#000"></div>
<div style="left:709px;top:219px;width:1px;height:502px;background:#000"></div>
<span class="t" id="t65" style="font-size:13.5px;color:#fff;line-height:20px;top:220.00px;font-weight:700;letter-spacing:-0.322px;left:-4.16px;width:300px;text-align:center;">Наименование</span>
<span class="t" id="t66" style="font-size:13.5px;color:#fff;line-height:20px;top:220.00px;font-weight:700;letter-spacing:-0.417px;left:156.29px;width:300px;text-align:center;">Дата</span>
<span class="t" id="t67" style="font-size:13.5px;color:#fff;line-height:20px;top:220.00px;font-weight:700;letter-spacing:-0.632px;left:317.68px;width:300px;text-align:center;">Количество</span>
<span class="t" id="t68" style="font-size:13.5px;color:#fff;line-height:20px;top:220.00px;font-weight:700;letter-spacing:-0.734px;left:478.63px;width:300px;text-align:center;">Цена</span>
<span class="t" id="t69" style="font-size:13.5px;color:#fff;line-height:20px;top:220.00px;font-weight:700;letter-spacing:-0.248px;left:630.88px;width:300px;text-align:center;">Сумма</span>
<span class="t" id="t70" style="font-size:13.5px;color:#000;line-height:20px;top:240.00px;letter-spacing:-0.025px;left:68px;">Картофель</span>
<span class="t" id="t71" style="font-size:13.5px;color:#000;line-height:20px;top:240.00px;letter-spacing:-0.500px;left:156.25px;width:300px;text-align:center;">30.04.2015</span>
<span class="t" id="t72" style="font-size:13.5px;color:#000;line-height:20px;top:240.00px;letter-spacing:-0.500px;left:318.25px;width:300px;text-align:center;">234</span>
<span class="t" id="t73" style="font-size:13.5px;color:#000;line-height:20px;top:240.00px;letter-spacing:-0.500px;left:478.45px;width:300px;text-align:center;">45</span>
<span class="t" id="t74" style="font-size:13.5px;color:#000;line-height:20px;top:240.00px;letter-spacing:-0.500px;left:632.45px;width:300px;text-align:center;">10526</span>
<span class="t" id="t75" style="font-size:13.5px;color:#000;line-height:20px;top:260.00px;letter-spacing:-0.025px;left:68px;">Картофель</span>
<span class="t" id="t76" style="font-size:13.5px;color:#000;line-height:20px;top:260.00px;letter-spacing:-0.500px;left:156.25px;width:300px;text-align:center;">30.04.2015</span>
<span class="t" id="t77" style="font-size:13.5px;color:#000;line-height:20px;top:260.00px;letter-spacing:-0.500px;left:318.25px;width:300px;text-align:center;">234</span>
<span class="t" id="t78" style="font-size:13.5px;color:#000;line-height:20px;top:260.00px;letter-spacing:-0.500px;left:478.45px;width:300px;text-align:center;">45</span>
<span class="t" id="t79" style="font-size:13.5px;color:#000;line-height:20px;top:260.00px;letter-spacing:-0.500px;left:632.45px;width:300px;text-align:center;">10526</span>
<span class="t" id="t80" style="font-size:13.5px;color:#000;line-height:20px;top:280.00px;letter-spacing:-0.025px;left:68px;">Картофель</span>
<span class="t" id="t81" style="font-size:13.5px;color:#000;line-height:20px;top:280.00px;letter-spacing:-0.500px;left:156.25px;width:300px;text-align:center;">30.04.2015</span>
<span class="t" id="t82" style="font-size:13.5px;color:#000;line-height:20px;top:280.00px;letter-spacing:-0.500px;left:318.25px;width:300px;text-align:center;">234</span>
<span class="t" id="t83" style="font-size:13.5px;color:#000;line-height:20px;top:280.00px;letter-spacing:-0.500px;left:478.45px;width:300px;text-align:center;">45</span>
<span class="t" id="t84" style="font-size:13.5px;color:#000;line-height:20px;top:280.00px;letter-spacing:-0.500px;left:632.45px;width:300px;text-align:center;">10526</span>
<span class="t" id="t85" style="font-size:13.5px;color:#000;line-height:20px;top:300.00px;letter-spacing:-0.025px;left:68px;">Картофель</span>
<span class="t" id="t86" style="font-size:13.5px;color:#000;line-height:20px;top:300.00px;letter-spacing:-0.500px;left:156.25px;width:300px;text-align:center;">30.04.2015</span>
<span class="t" id="t87" style="font-size:13.5px;color:#000;line-height:20px;top:300.00px;letter-spacing:-0.500px;left:318.25px;width:300px;text-align:center;">234</span>
<span class="t" id="t88" style="font-size:13.5px;color:#000;line-height:20px;top:300.00px;letter-spacing:-0.500px;left:478.45px;width:300px;text-align:center;">45</span>
<span class="t" id="t89" style="font-size:13.5px;color:#000;line-height:20px;top:300.00px;letter-spacing:-0.500px;left:632.45px;width:300px;text-align:center;">10526</span>
<span class="t" id="t90" style="font-size:13.5px;color:#000;line-height:20px;top:320.00px;letter-spacing:-0.025px;left:68px;">Картофель</span>
<span class="t" id="t91" style="font-size:13.5px;color:#000;line-height:20px;top:320.00px;letter-spacing:-0.500px;left:156.25px;width:300px;text-align:center;">30.04.2015</span>
<span class="t" id="t92" style="font-size:13.5px;color:#000;line-height:20px;top:320.00px;letter-spacing:-0.500px;left:318.25px;width:300px;text-align:center;">234</span>
<span class="t" id="t93" style="font-size:13.5px;color:#000;line-height:20px;top:320.00px;letter-spacing:-0.500px;left:478.45px;width:300px;text-align:center;">45</span>
<span class="t" id="t94" style="font-size:13.5px;color:#000;line-height:20px;top:320.00px;letter-spacing:-0.500px;left:632.45px;width:300px;text-align:center;">10526</span>
<span class="t" id="t95" style="font-size:13.5px;color:#000;line-height:20px;top:340.00px;letter-spacing:-0.025px;left:68px;">Картофель</span>
<span class="t" id="t96" style="font-size:13.5px;color:#000;line-height:20px;top:340.00px;letter-spacing:-0.500px;left:156.25px;width:300px;text-align:center;">30.04.2015</span>
<span class="t" id="t97" style="font-size:13.5px;color:#000;line-height:20px;top:340.00px;letter-spacing:-0.500px;left:318.25px;width:300px;text-align:center;">234</span>
<span class="t" id="t98" style="font-size:13.5px;color:#000;line-height:20px;top:340.00px;letter-spacing:-0.500px;left:478.45px;width:300px;text-align:center;">45</span>
<span class="t" id="t99" style="font-size:13.5px;color:#000;line-height:20px;top:340.00px;letter-spacing:-0.500px;left:632.45px;width:300px;text-align:center;">10526</span>
<span class="t" id="t100" style="font-size:13.5px;color:#000;line-height:20px;top:360.00px;letter-spacing:-0.025px;left:68px;">Картофель</span>
<span class="t" id="t101" style="font-size:13.5px;color:#000;line-height:20px;top:360.00px;letter-spacing:-0.500px;left:156.25px;width:300px;text-align:center;">30.04.2015</span>
<span class="t" id="t102" style="font-size:13.5px;color:#000;line-height:20px;top:360.00px;letter-spacing:-0.500px;left:318.25px;width:300px;text-align:center;">234</span>
<span class="t" id="t103" style="font-size:13.5px;color:#000;line-height:20px;top:360.00px;letter-spacing:-0.500px;left:478.45px;width:300px;text-align:center;">45</span>
<span class="t" id="t104" style="font-size:13.5px;color:#000;line-height:20px;top:360.00px;letter-spacing:-0.500px;left:632.45px;width:300px;text-align:center;">10526</span>
<span class="t" id="t105" style="font-size:13.5px;color:#000;line-height:20px;top:380.00px;letter-spacing:-0.025px;left:68px;">Картофель</span>
<span class="t" id="t106" style="font-size:13.5px;color:#000;line-height:20px;top:380.00px;letter-spacing:-0.500px;left:156.25px;width:300px;text-align:center;">30.04.2015</span>
<span class="t" id="t107" style="font-size:13.5px;color:#000;line-height:20px;top:380.00px;letter-spacing:-0.500px;left:318.25px;width:300px;text-align:center;">234</span>
<span class="t" id="t108" style="font-size:13.5px;color:#000;line-height:20px;top:380.00px;letter-spacing:-0.500px;left:478.45px;width:300px;text-align:center;">45</span>
<span class="t" id="t109" style="font-size:13.5px;color:#000;line-height:20px;top:380.00px;letter-spacing:-0.500px;left:632.45px;width:300px;text-align:center;">10526</span>
<span class="t" id="t110" style="font-size:13.5px;color:#000;line-height:20px;top:400.00px;letter-spacing:-0.025px;left:68px;">Картофель</span>
<span class="t" id="t111" style="font-size:13.5px;color:#000;line-height:20px;top:400.00px;letter-spacing:-0.500px;left:156.25px;width:300px;text-align:center;">02.05.2016</span>
<span class="t" id="t112" style="font-size:13.5px;color:#000;line-height:20px;top:400.00px;letter-spacing:-0.500px;left:318.25px;width:300px;text-align:center;">264</span>
<span class="t" id="t113" style="font-size:13.5px;color:#000;line-height:20px;top:400.00px;letter-spacing:-0.500px;left:478.45px;width:300px;text-align:center;">45</span>
<span class="t" id="t114" style="font-size:13.5px;color:#000;line-height:20px;top:400.00px;letter-spacing:-0.500px;left:632.45px;width:300px;text-align:center;">11896</span>
<span class="t" id="t115" style="font-size:13.5px;color:#000;line-height:20px;top:420.00px;letter-spacing:-0.025px;left:68px;">Картофель</span>
<span class="t" id="t116" style="font-size:13.5px;color:#000;line-height:20px;top:420.00px;letter-spacing:-0.500px;left:156.25px;width:300px;text-align:center;">02.05.2016</span>
<span class="t" id="t117" style="font-size:13.5px;color:#000;line-height:20px;top:420.00px;letter-spacing:-0.500px;left:318.25px;width:300px;text-align:center;">264</span>
<span class="t" id="t118" style="font-size:13.5px;color:#000;line-height:20px;top:420.00px;letter-spacing:-0.500px;left:478.45px;width:300px;text-align:center;">45</span>
<span class="t" id="t119" style="font-size:13.5px;color:#000;line-height:20px;top:420.00px;letter-spacing:-0.500px;left:632.45px;width:300px;text-align:center;">11896</span>
<span class="t" id="t120" style="font-size:13.5px;color:#000;line-height:20px;top:440.00px;letter-spacing:-0.025px;left:68px;">Картофель</span>
<span class="t" id="t121" style="font-size:13.5px;color:#000;line-height:20px;top:440.00px;letter-spacing:-0.500px;left:156.25px;width:300px;text-align:center;">02.05.2016</span>
<span class="t" id="t122" style="font-size:13.5px;color:#000;line-height:20px;top:440.00px;letter-spacing:-0.500px;left:318.25px;width:300px;text-align:center;">264</span>
<span class="t" id="t123" style="font-size:13.5px;color:#000;line-height:20px;top:440.00px;letter-spacing:-0.500px;left:478.45px;width:300px;text-align:center;">45</span>
<span class="t" id="t124" style="font-size:13.5px;color:#000;line-height:20px;top:440.00px;letter-spacing:-0.500px;left:632.45px;width:300px;text-align:center;">11896</span>
<span class="t" id="t125" style="font-size:13.5px;color:#000;line-height:20px;top:460.00px;letter-spacing:-0.025px;left:68px;">Картофель</span>
<span class="t" id="t126" style="font-size:13.5px;color:#000;line-height:20px;top:460.00px;letter-spacing:-0.500px;left:156.25px;width:300px;text-align:center;">02.05.2016</span>
<span class="t" id="t127" style="font-size:13.5px;color:#000;line-height:20px;top:460.00px;letter-spacing:-0.500px;left:318.25px;width:300px;text-align:center;">264</span>
<span class="t" id="t128" style="font-size:13.5px;color:#000;line-height:20px;top:460.00px;letter-spacing:-0.500px;left:478.45px;width:300px;text-align:center;">45</span>
<span class="t" id="t129" style="font-size:13.5px;color:#000;line-height:20px;top:460.00px;letter-spacing:-0.500px;left:632.45px;width:300px;text-align:center;">11896</span>
<span class="t" id="t130" style="font-size:13.5px;color:#000;line-height:20px;top:480.00px;letter-spacing:-0.025px;left:68px;">Картофель</span>
<span class="t" id="t131" style="font-size:13.5px;color:#000;line-height:20px;top:480.00px;letter-spacing:-0.500px;left:156.25px;width:300px;text-align:center;">02.05.2016</span>
<span class="t" id="t132" style="font-size:13.5px;color:#000;line-height:20px;top:480.00px;letter-spacing:-0.500px;left:318.25px;width:300px;text-align:center;">264</span>
<span class="t" id="t133" style="font-size:13.5px;color:#000;line-height:20px;top:480.00px;letter-spacing:-0.500px;left:478.45px;width:300px;text-align:center;">45</span>
<span class="t" id="t134" style="font-size:13.5px;color:#000;line-height:20px;top:480.00px;letter-spacing:-0.500px;left:632.45px;width:300px;text-align:center;">11896</span>
<span class="t" id="t135" style="font-size:13.5px;color:#000;line-height:20px;top:500.00px;letter-spacing:-0.025px;left:68px;">Картофель</span>
<span class="t" id="t136" style="font-size:13.5px;color:#000;line-height:20px;top:500.00px;letter-spacing:-0.500px;left:156.25px;width:300px;text-align:center;">02.05.2016</span>
<span class="t" id="t137" style="font-size:13.5px;color:#000;line-height:20px;top:500.00px;letter-spacing:-0.500px;left:318.25px;width:300px;text-align:center;">264</span>
<span class="t" id="t138" style="font-size:13.5px;color:#000;line-height:20px;top:500.00px;letter-spacing:-0.500px;left:478.45px;width:300px;text-align:center;">45</span>
<span class="t" id="t139" style="font-size:13.5px;color:#000;line-height:20px;top:500.00px;letter-spacing:-0.500px;left:632.45px;width:300px;text-align:center;">11896</span>
<span class="t" id="t140" style="font-size:13.5px;color:#000;line-height:20px;top:520.00px;letter-spacing:-0.025px;left:68px;">Картофель</span>
<span class="t" id="t141" style="font-size:13.5px;color:#000;line-height:20px;top:520.00px;letter-spacing:-0.500px;left:156.25px;width:300px;text-align:center;">02.05.2016</span>
<span class="t" id="t142" style="font-size:13.5px;color:#000;line-height:20px;top:520.00px;letter-spacing:-0.500px;left:318.25px;width:300px;text-align:center;">264</span>
<span class="t" id="t143" style="font-size:13.5px;color:#000;line-height:20px;top:520.00px;letter-spacing:-0.500px;left:478.45px;width:300px;text-align:center;">45</span>
<span class="t" id="t144" style="font-size:13.5px;color:#000;line-height:20px;top:520.00px;letter-spacing:-0.500px;left:632.45px;width:300px;text-align:center;">11896</span>
<span class="t" id="t145" style="font-size:13.5px;color:#000;line-height:20px;top:540.00px;letter-spacing:-0.025px;left:68px;">Картофель</span>
<span class="t" id="t146" style="font-size:13.5px;color:#000;line-height:20px;top:540.00px;letter-spacing:-0.500px;left:156.25px;width:300px;text-align:center;">02.05.2016</span>
<span class="t" id="t147" style="font-size:13.5px;color:#000;line-height:20px;top:540.00px;letter-spacing:-0.500px;left:318.25px;width:300px;text-align:center;">264</span>
<span class="t" id="t148" style="font-size:13.5px;color:#000;line-height:20px;top:540.00px;letter-spacing:-0.500px;left:478.45px;width:300px;text-align:center;">45</span>
<span class="t" id="t149" style="font-size:13.5px;color:#000;line-height:20px;top:540.00px;letter-spacing:-0.500px;left:632.45px;width:300px;text-align:center;">11896</span>
<span class="t" id="t150" style="font-size:13.5px;color:#000;line-height:20px;top:560.00px;letter-spacing:-0.025px;left:68px;">Картофель</span>
<span class="t" id="t151" style="font-size:13.5px;color:#000;line-height:20px;top:560.00px;letter-spacing:-0.500px;left:156.25px;width:300px;text-align:center;">02.05.2016</span>
<span class="t" id="t152" style="font-size:13.5px;color:#000;line-height:20px;top:560.00px;letter-spacing:-0.500px;left:318.25px;width:300px;text-align:center;">264</span>
<span class="t" id="t153" style="font-size:13.5px;color:#000;line-height:20px;top:560.00px;letter-spacing:-0.500px;left:478.45px;width:300px;text-align:center;">45</span>
<span class="t" id="t154" style="font-size:13.5px;color:#000;line-height:20px;top:560.00px;letter-spacing:-0.500px;left:632.45px;width:300px;text-align:center;">11896</span>
<span class="t" id="t155" style="font-size:13.5px;color:#000;line-height:20px;top:580.00px;letter-spacing:-0.025px;left:68px;">Картофель</span>
<span class="t" id="t156" style="font-size:13.5px;color:#000;line-height:20px;top:580.00px;letter-spacing:-0.500px;left:156.25px;width:300px;text-align:center;">03.05.2016</span>
<span class="t" id="t157" style="font-size:13.5px;color:#000;line-height:20px;top:580.00px;letter-spacing:-0.500px;left:318.25px;width:300px;text-align:center;">343</span>
<span class="t" id="t158" style="font-size:13.5px;color:#000;line-height:20px;top:580.00px;letter-spacing:-0.500px;left:478.45px;width:300px;text-align:center;">45</span>
<span class="t" id="t159" style="font-size:13.5px;color:#000;line-height:20px;top:580.00px;letter-spacing:-0.500px;left:632.45px;width:300px;text-align:center;">15456</span>
<span class="t" id="t160" style="font-size:13.5px;color:#000;line-height:20px;top:600.00px;letter-spacing:-0.025px;left:68px;">Картофель</span>
<span class="t" id="t161" style="font-size:13.5px;color:#000;line-height:20px;top:600.00px;letter-spacing:-0.500px;left:156.25px;width:300px;text-align:center;">03.05.2016</span>
<span class="t" id="t162" style="font-size:13.5px;color:#000;line-height:20px;top:600.00px;letter-spacing:-0.500px;left:318.25px;width:300px;text-align:center;">343</span>
<span class="t" id="t163" style="font-size:13.5px;color:#000;line-height:20px;top:600.00px;letter-spacing:-0.500px;left:478.45px;width:300px;text-align:center;">45</span>
<span class="t" id="t164" style="font-size:13.5px;color:#000;line-height:20px;top:600.00px;letter-spacing:-0.500px;left:632.45px;width:300px;text-align:center;">15456</span>
<span class="t" id="t165" style="font-size:13.5px;color:#000;line-height:20px;top:620.00px;letter-spacing:-0.025px;left:68px;">Картофель</span>
<span class="t" id="t166" style="font-size:13.5px;color:#000;line-height:20px;top:620.00px;letter-spacing:-0.500px;left:156.25px;width:300px;text-align:center;">03.05.2016</span>
<span class="t" id="t167" style="font-size:13.5px;color:#000;line-height:20px;top:620.00px;letter-spacing:-0.500px;left:318.25px;width:300px;text-align:center;">343</span>
<span class="t" id="t168" style="font-size:13.5px;color:#000;line-height:20px;top:620.00px;letter-spacing:-0.500px;left:478.45px;width:300px;text-align:center;">45</span>
<span class="t" id="t169" style="font-size:13.5px;color:#000;line-height:20px;top:620.00px;letter-spacing:-0.500px;left:632.45px;width:300px;text-align:center;">15456</span>
<span class="t" id="t170" style="font-size:13.5px;color:#000;line-height:20px;top:640.00px;letter-spacing:-0.025px;left:68px;">Картофель</span>
<span class="t" id="t171" style="font-size:13.5px;color:#000;line-height:20px;top:640.00px;letter-spacing:-0.500px;left:156.25px;width:300px;text-align:center;">03.05.2016</span>
<span class="t" id="t172" style="font-size:13.5px;color:#000;line-height:20px;top:640.00px;letter-spacing:-0.500px;left:318.25px;width:300px;text-align:center;">343</span>
<span class="t" id="t173" style="font-size:13.5px;color:#000;line-height:20px;top:640.00px;letter-spacing:-0.500px;left:478.45px;width:300px;text-align:center;">45</span>
<span class="t" id="t174" style="font-size:13.5px;color:#000;line-height:20px;top:640.00px;letter-spacing:-0.500px;left:632.45px;width:300px;text-align:center;">15456</span>
<span class="t" id="t175" style="font-size:13.5px;color:#000;line-height:20px;top:660.00px;letter-spacing:-0.025px;left:68px;">Картофель</span>
<span class="t" id="t176" style="font-size:13.5px;color:#000;line-height:20px;top:660.00px;letter-spacing:-0.500px;left:156.25px;width:300px;text-align:center;">03.05.2016</span>
<span class="t" id="t177" style="font-size:13.5px;color:#000;line-height:20px;top:660.00px;letter-spacing:-0.500px;left:318.25px;width:300px;text-align:center;">343</span>
<span class="t" id="t178" style="font-size:13.5px;color:#000;line-height:20px;top:660.00px;letter-spacing:-0.500px;left:478.45px;width:300px;text-align:center;">45</span>
<span class="t" id="t179" style="font-size:13.5px;color:#000;line-height:20px;top:660.00px;letter-spacing:-0.500px;left:632.45px;width:300px;text-align:center;">15456</span>
<span class="t" id="t180" style="font-size:13.5px;color:#000;line-height:20px;top:680.00px;letter-spacing:-0.025px;left:68px;">Картофель</span>
<span class="t" id="t181" style="font-size:13.5px;color:#000;line-height:20px;top:680.00px;letter-spacing:-0.500px;left:156.25px;width:300px;text-align:center;">03.05.2016</span>
<span class="t" id="t182" style="font-size:13.5px;color:#000;line-height:20px;top:680.00px;letter-spacing:-0.500px;left:318.25px;width:300px;text-align:center;">343</span>
<span class="t" id="t183" style="font-size:13.5px;color:#000;line-height:20px;top:680.00px;letter-spacing:-0.500px;left:478.45px;width:300px;text-align:center;">45</span>
<span class="t" id="t184" style="font-size:13.5px;color:#000;line-height:20px;top:680.00px;letter-spacing:-0.500px;left:632.45px;width:300px;text-align:center;">15456</span>
<span class="t" id="t185" style="font-size:13.5px;color:#000;line-height:20px;top:700.00px;letter-spacing:-0.025px;left:68px;">Картофель</span>
<span class="t" id="t186" style="font-size:13.5px;color:#000;line-height:20px;top:700.00px;letter-spacing:-0.500px;left:156.25px;width:300px;text-align:center;">03.05.2016</span>
<span class="t" id="t187" style="font-size:13.5px;color:#000;line-height:20px;top:700.00px;letter-spacing:-0.500px;left:318.25px;width:300px;text-align:center;">343</span>
<span class="t" id="t188" style="font-size:13.5px;color:#000;line-height:20px;top:700.00px;letter-spacing:-0.500px;left:478.45px;width:300px;text-align:center;">45</span>
<span class="t" id="t189" style="font-size:13.5px;color:#000;line-height:20px;top:700.00px;letter-spacing:-0.500px;left:632.45px;width:300px;text-align:center;">15456</span>
<div style="left:209px;top:220px;width:17px;height:17px;background:linear-gradient(#ffffff,#f2f4f8);border:1px solid #b4c0d4;"></div>
<svg style="left:214px;top:227px" width="7" height="4" viewBox="0 0 7 4" ><path d="M0 0h7L3.500 4z" fill="#4a505a"/></svg>
<div style="left:370px;top:220px;width:17px;height:17px;background:linear-gradient(#ffffff,#f2f4f8);border:1px solid #b4c0d4;"></div>
<svg style="left:375px;top:227px" width="7" height="4" viewBox="0 0 7 4" ><path d="M0 0h7L3.500 4z" fill="#4a505a"/></svg>
<div style="left:531px;top:220px;width:17px;height:17px;background:linear-gradient(#ffffff,#f2f4f8);border:1px solid #b4c0d4;"></div>
<svg style="left:536px;top:227px" width="7" height="4" viewBox="0 0 7 4" ><path d="M0 0h7L3.500 4z" fill="#4a505a"/></svg>
<div style="left:692px;top:220px;width:17px;height:17px;background:linear-gradient(#ffffff,#f2f4f8);border:1px solid #b4c0d4;"></div>
<svg style="left:697px;top:227px" width="7" height="4" viewBox="0 0 7 4" ><path d="M0 0h7L3.500 4z" fill="#4a505a"/></svg>
<div style="left:386px;top:338px;width:164px;height:22px;border:1px solid #000;background:#fff"></div>
<div style="left:388px;top:340px;width:160px;height:18px;border:1px solid #000;background:#fff"></div>
<div style="left:547px;top:357px;width:5px;height:5px;background:#000;border:1px solid #fff"></div>
<span class="t" id="t190" style="font-size:13.5px;color:#000;line-height:20px;top:340.00px;letter-spacing:-0.500px;left:318.25px;width:300px;text-align:center;">234</span>
<div style="left:823px;top:198px;width:16px;height:523px;background:#e9ecf0;border-left:1px solid #c9ced6"></div>
<div style="left:824px;top:200px;width:14px;height:7px;background:#fff;border:1px solid #8e96a2;"></div>
<svg style="left:826px;top:212px" width="9" height="6"><path d="M4.5 0.5L9 5.5H0z" fill="#434a54"/></svg>
<div style="left:824px;top:224px;width:14px;height:47px;background:linear-gradient(90deg,#f6f7f9,#e4e7eb);border:1px solid #9aa2ae;border-radius:2px"></div>
<div style="left:827px;top:244px;width:8px;height:1px;background:#6e7682"></div>
<div style="left:827px;top:246px;width:8px;height:1px;background:#6e7682"></div>
<div style="left:827px;top:248px;width:8px;height:1px;background:#6e7682"></div>
<div style="left:827px;top:250px;width:8px;height:1px;background:#6e7682"></div>
<svg style="left:826px;top:709px" width="9" height="6"><path d="M0 0.5H9L4.5 5.5z" fill="#434a54"/></svg>
<div style="left:40px;top:721px;width:799px;height:17px;background:linear-gradient(#eceff3,#e1e5ea);border-top:1px solid #a4acb8"></div>
<div style="left:823px;top:721px;width:16px;height:17px;background:#e9ecf0"></div>
<svg style="left:44px;top:725px" width="56" height="9" viewBox="0 0 56 9" ><g fill="#3d4652"><path d="M1.500 0.500h1.600v8H1.500zM8 0.500v8L3.500 4.500z"/><path d="M22.200 0.500v8L17.700 4.500z"/><path d="M31.500 0.500v8l4.500-4z"/><path d="M46 0.500v8l4.500-4zM50.800 0.500h1.600v8h-1.600z"/></g></svg>
<svg style="left:100px;top:722px" width="380" height="16" viewBox="0 0 380 16" ><path d="M137 16L149 0H217L205.500 16z" fill="#f1f3f6"/><path d="M205.500 16L217 0H280L269 16z" fill="#f1f3f6"/><path d="M269 16L280 0H340L329 16z" fill="#f1f3f6"/><path d="M329 16L340 0H372L360 16z" fill="#f1f3f6"/><path d="M3 16V0H149L137 16z" fill="#fff"/><path d="M3.500 0V15.500" stroke="#8a94a2" fill="none"/><g stroke="#7c8694" fill="none" stroke-width="1"><path d="M149 0L137.400 15.500h3"/><path d="M217 0L205.500 15.500h3"/><path d="M280 0L269 15.500h3"/><path d="M340 0L329 15.500h3"/><path d="M372 0L360 15.500h3"/></g></svg>
<span class="t" id="t191" style="font-size:12px;color:#3f4a5c;line-height:18px;top:722.00px;font-weight:700;letter-spacing:0.377px;left:113.5px;">Продукты питания</span>
<span class="t" id="t192" style="font-size:12px;color:#3a4a66;line-height:18px;top:722.00px;letter-spacing:-0.060px;left:251.3px;">Таблица</span>
<span class="t" id="t193" style="font-size:12px;color:#3a4a66;line-height:18px;top:722.00px;letter-spacing:-0.079px;left:318.3px;">Рассчет</span>
<span class="t" id="t194" style="font-size:12px;color:#3a4a66;line-height:18px;top:722.00px;letter-spacing:-0.420px;left:384.2px;">Вывод</span>
<svg style="left:441px;top:724px" width="15" height="12" viewBox="0 0 15 12" ><rect x="3.500" y="2.500" width="10.500" height="7.500" rx="1.500" fill="#f4f8fc" stroke="#3a6cc0" stroke-width="1.200"/><path d="M5 10v1.500h7V10" stroke="#3a6cc0" fill="none"/><path d="M3 0l0.900 2L6 2.200 4.400 3.500 5 5.800 3 4.500 1 5.800 1.600 3.500 0 2.200 2.100 2z" fill="#f0a020"/></svg>
<div style="left:510px;top:722px;width:313px;height:16px;background:linear-gradient(#eef0f3,#e1e5ea)"></div>
<div style="left:510px;top:723px;width:8px;height:15px;background:#fff;border:1px solid #7c8694"></div>
<div style="left:513.5px;top:726px;width:1px;height:9px;background:#596270"></div>
<svg style="left:522px;top:726px" width="6" height="9" viewBox="0 0 6 9" ><path d="M5.500 0.500v8L0.500 4.500z" fill="#434a54"/></svg>
<div style="left:535px;top:723px;width:197px;height:15px;background:linear-gradient(#f8f9fa,#e2e6ea);border:1px solid #9aa2ae;border-radius:2px"></div>
<div style="left:630px;top:727px;width:1px;height:7px;background:#7e8692"></div>
<div style="left:632px;top:727px;width:1px;height:7px;background:#7e8692"></div>
<div style="left:634px;top:727px;width:1px;height:7px;background:#7e8692"></div>
<div style="left:636px;top:727px;width:1px;height:7px;background:#7e8692"></div>
<svg style="left:805px;top:726px" width="6" height="9" viewBox="0 0 6 9" ><path d="M0.500 0.500v8L5.500 4.500z" fill="#434a54"/></svg>
<div style="left:816px;top:723px;width:8px;height:15px;background:#fff;border:1px solid #7c8694"></div>
<div style="left:819.5px;top:726px;width:1px;height:9px;background:#596270"></div>
<div style="left:40px;top:738px;width:799px;height:22px;background:linear-gradient(#e2e7ee,#cdd5df 50%,#c2cbd6);border-top:1px solid #8e98a6"></div>
<span class="t" id="t195" style="font-size:11.5px;color:#2a3038;line-height:17px;top:740.50px;letter-spacing:0.097px;left:48px;">Готово</span>
<div style="left:94px;top:741px;width:1px;height:17px;background:#a9b2be"></div>
<div style="left:95px;top:741px;width:1px;height:17px;background:#f4f6f8"></div>
<div style="left:129px;top:741px;width:1px;height:17px;background:#a9b2be"></div>
<div style="left:130px;top:741px;width:1px;height:17px;background:#f4f6f8"></div>
<svg style="left:104px;top:742px" width="15" height="13" viewBox="0 0 15 13" ><rect x="2.500" y="1.500" width="12" height="11" fill="#fff" stroke="#8e98a8"/><rect x="3" y="2" width="11" height="2.500" fill="#5b8fd8"/><path d="M4.500 6.500h3M8.500 6.500h4.500M4.500 8.500h3M8.500 8.500h4.500M4.500 10.500h3M8.500 10.500h4.500" stroke="#4a80d0" stroke-width="1.100"/><circle cx="2.800" cy="2.800" r="2.600" fill="#e06030"/><circle cx="2.300" cy="2.200" r="1" fill="#f4b090"/></svg>
<div style="left:582px;top:741px;width:1px;height:17px;background:#a9b2be"></div>
<div style="left:583px;top:741px;width:1px;height:17px;background:#f4f6f8"></div>
<div style="left:587px;top:740px;width:19px;height:19px;background:linear-gradient(#fde598,#fbcf5c);border:1px solid #dfa030;border-radius:3px"></div>
<svg style="left:590px;top:744px" width="13" height="10" viewBox="0 0 13 10" ><rect x="0" y="0" width="13" height="10" fill="#5a6270"/><g fill="#fff"><rect x="1" y="1" width="3" height="2"/><rect x="5" y="1" width="3" height="2"/><rect x="9" y="1" width="3" height="2"/><rect x="1" y="4" width="3" height="2"/><rect x="5" y="4" width="3" height="2"/><rect x="9" y="4" width="3" height="2"/><rect x="1" y="7" width="3" height="2"/><rect x="5" y="7" width="3" height="2"/><rect x="9" y="7" width="3" height="2"/></g></svg>
<svg style="left:608px;top:743px" width="14" height="12" viewBox="0 0 14 12" ><rect x="0.500" y="0.500" width="13" height="11" fill="#c9cdd5" stroke="#6e7682"/><rect x="3.500" y="2.500" width="7" height="7" fill="#fff" stroke="#6e7682" stroke-width="0.800"/><path d="M5 5h4M5 7h4" stroke="#9aa2ae" stroke-width="0.800"/></svg>
<svg style="left:627px;top:743px" width="14" height="12" viewBox="0 0 14 12" ><rect x="0.500" y="0.500" width="13" height="11" fill="#c9cdd5" stroke="#6e7682"/><rect x="1.500" y="1.500" width="3" height="5" fill="#fff"/><rect x="5.500" y="1.500" width="3" height="5" fill="#fff"/><path d="M1 7.500h8.500V1" stroke="#6e7682" fill="none" stroke-width="0.800"/></svg>
<span class="t" id="t196" style="font-size:11.5px;color:#2a3038;line-height:17px;top:741.00px;letter-spacing:-0.974px;left:653px;">100%</span>
<div style="left:704px;top:748px;width:100px;height:1px;background:#7a8492"></div>
<div style="left:704px;top:749px;width:100px;height:1px;background:#f4f6f8"></div>
<div style="left:688.5px;top:741px;width:15px;height:15px;border-radius:50%;background:linear-gradient(#fdfdfe,#d8dde4);border:1px solid #6a7482"></div>
<div style="left:804.0px;top:741px;width:15px;height:15px;border-radius:50%;background:linear-gradient(#fdfdfe,#d8dde4);border:1px solid #6a7482"></div>
<div style="left:692px;top:748px;width:8px;height:2px;background:#3d4652"></div>
<div style="left:807.5px;top:748px;width:8px;height:2px;background:#3d4652"></div>
<div style="left:810.5px;top:745px;width:2px;height:8px;background:#3d4652"></div>
<svg style="left:749px;top:741px" width="11" height="15"><path d="M1 0.5h9v9L5.5 14 1 9.5z" fill="#f2f4f7" stroke="#5a6472"/></svg>
<svg style="left:827px;top:748px" width="12" height="12" viewBox="0 0 12 12" ><g fill="#9aa4b2"><rect x="9" y="1" width="2" height="2"/><rect x="5" y="5" width="2" height="2"/><rect x="9" y="5" width="2" height="2"/><rect x="1" y="9" width="2" height="2"/><rect x="5" y="9" width="2" height="2"/><rect x="9" y="9" width="2" height="2"/></g></svg>
</div></body></html>
